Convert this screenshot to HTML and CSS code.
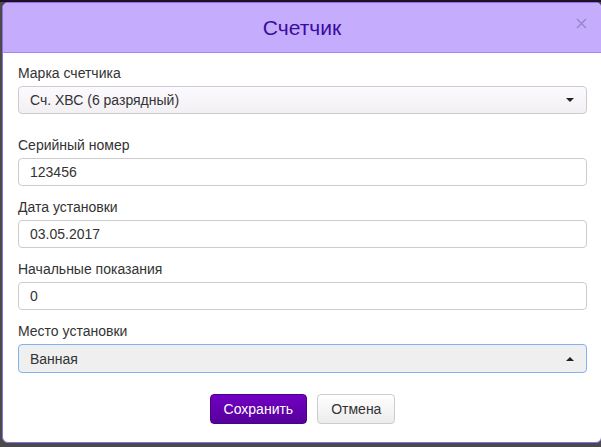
FILE: index.html
```html
<!DOCTYPE html>
<html lang="ru">
<head>
<meta charset="utf-8">
<title>Счетчик</title>
<link rel="stylesheet" href="styles.css">
</head>
<body>
<div class="modal">
  <div class="modal-header">
    <h4 class="modal-title">Счетчик</h4>
    <svg class="close" width="11" height="11" viewBox="0 0 11 11"><path d="M1 1L10 10M10 1L1 10" stroke="#9a88cc" stroke-width="1.6" fill="none"/></svg>
  </div>
  <div class="modal-body">
    <div class="group group-first">
      <div class="label">Марка счетчика</div>
      <div class="select">
        <span>Сч. ХВС (6 разрядный)</span>
        <span class="caret"></span>
      </div>
    </div>
    <div class="group">
      <div class="label">Серийный номер</div>
      <div class="input">123456</div>
    </div>
    <div class="group">
      <div class="label">Дата установки</div>
      <div class="input">03.05.2017</div>
    </div>
    <div class="group">
      <div class="label">Начальные показания</div>
      <div class="input">0</div>
    </div>
    <div class="group">
      <div class="label">Место установки</div>
      <div class="select select-open">
        <span>Ванная</span>
        <span class="caret caret-up"></span>
      </div>
    </div>
    <div class="buttons">
      <button class="btn btn-primary">Сохранить</button>
      <button class="btn btn-default">Отмена</button>
    </div>
  </div>
</div>
</body>
</html>
```

FILE: styles.css
```css
html, body {
  margin: 0;
  padding: 0;
}
body {
  width: 601px;
  height: 447px;
  overflow: hidden;
  background: #4a4a4a;
  border-top: 2px solid #1c0f2c;
  box-sizing: border-box;
  padding-left: 2px;
  font-family: "Liberation Sans", Arial, sans-serif;
  font-size: 14px;
  color: #333;
}
.modal {
  width: 600px;
  height: 441px;
  box-sizing: border-box;
  background: #fff;
  border: 1px solid #8d6fe0;
  border-radius: 6px;
  overflow: hidden;
  display: flex;
  flex-direction: column;
}
.modal-header {
  height: 50px;
  box-sizing: border-box;
  background: #c5acfd;
  border-bottom: 1px solid #a486f6;
  display: flex;
  align-items: center;
  justify-content: center;
  position: relative;
}
.modal-title {
  margin: 0;
  font-size: 21px;
  font-weight: normal;
  color: #3a0ca0;
  line-height: 24px;
}
.close {
  position: absolute;
  right: 14px;
  top: 15px;
}
.modal-body {
  padding: 10px 14px 0 15px;
}
.group {
  margin-bottom: 11px;
}
.group-first {
  margin-bottom: 21px;
}
.label {
  line-height: 20px;
  margin-bottom: 3px;
}
.input, .select {
  height: 28px;
  box-sizing: border-box;
  border: 1px solid #ccc;
  border-radius: 4px;
  padding: 0 11px;
  display: flex;
  align-items: center;
  line-height: 20px;
}
.select {
  justify-content: space-between;
  background: linear-gradient(#fdfaff, #f2f0f3);
  padding-right: 12px;
}
.select-open {
  background: #efefef;
  border-color: #80b3f0;
  height: 29px;
}
.caret {
  width: 0;
  height: 0;
  border-left: 4px solid transparent;
  border-right: 4px solid transparent;
  border-top: 4px solid #222;
}
.caret-up {
  border-top: 0;
  border-bottom: 4px solid #222;
}
.buttons {
  display: flex;
  justify-content: center;
  gap: 10px;
  margin-top: 21px;
}
.btn {
  height: 30px;
  box-sizing: border-box;
  border-radius: 4px;
  font-family: "Liberation Sans", Arial, sans-serif;
  font-size: 14px;
  padding: 0 13px;
}
.btn-primary {
  background: linear-gradient(#7200c4, #56009a);
  border: 1px solid #4b0088;
  color: #fff;
}
.btn-default {
  background: linear-gradient(#fff, #ececec);
  border: 1px solid #ccc;
  color: #333;
}
```
